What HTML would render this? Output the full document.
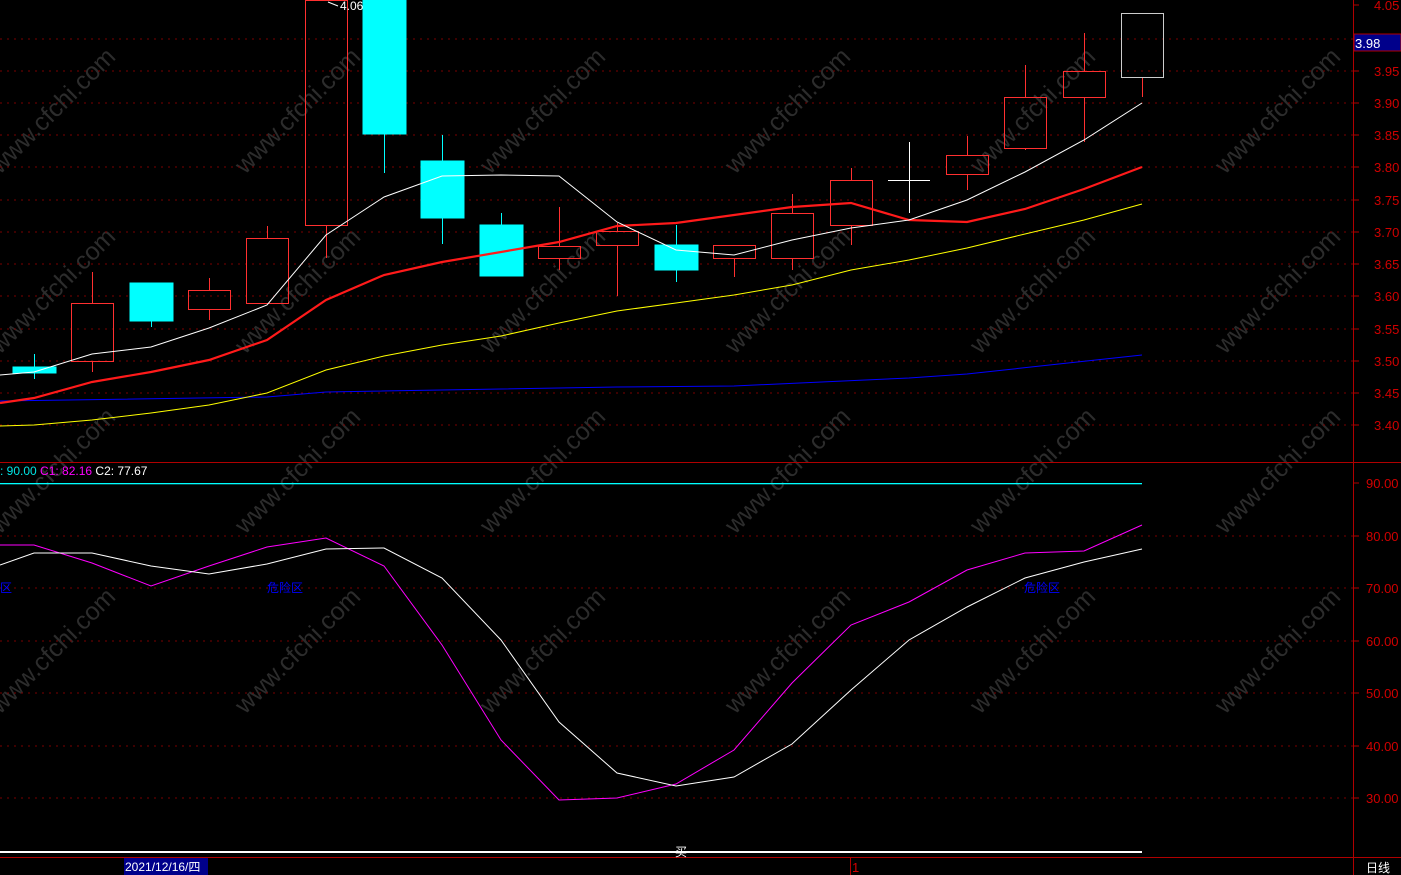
<!DOCTYPE html>
<html><head><meta charset="utf-8"><style>
body{margin:0;background:#000;width:1401px;height:875px;overflow:hidden;font-family:"Liberation Sans","Noto Sans CJK SC",sans-serif}
svg{position:absolute;left:0;top:0}
</style></head><body>
<svg width="1401" height="875" xmlns="http://www.w3.org/2000/svg" font-family="Liberation Sans, Noto Sans CJK SC, sans-serif">
<g fill="#2c2c2c" font-size="25">
<g id="wm">
<text transform="translate(0,175) rotate(-45)">www.cfchi.com</text>
<text transform="translate(245,175) rotate(-45)">www.cfchi.com</text>
<text transform="translate(490,175) rotate(-45)">www.cfchi.com</text>
<text transform="translate(735,175) rotate(-45)">www.cfchi.com</text>
<text transform="translate(980,175) rotate(-45)">www.cfchi.com</text>
<text transform="translate(1225,175) rotate(-45)">www.cfchi.com</text>
</g>
<use href="#wm" y="180"/><use href="#wm" y="360"/><use href="#wm" y="540"/>
</g>
<g stroke="#7a0000" stroke-dasharray="2,5">
<path d="M0 39H1353M0 71H1353M0 103H1353M0 135H1353M0 167H1353M0 200H1353M0 232H1353M0 264H1353M0 296H1353M0 329H1353M0 361H1353M0 393H1353M0 425H1353"/>
<path d="M0 536H1353M0 588H1353M0 641H1353M0 693H1353M0 746H1353M0 798H1353"/>
</g>
<path d="M0 462.5H1401M0 857.5H1401M1353.5 0V875M850.5 857V875" stroke="#b00000"/>
<g fill="#d00000" font-size="13">
<text x="1374" y="10">4.05</text><text x="1374" y="76">3.95</text><text x="1374" y="108">3.90</text><text x="1374" y="140">3.85</text><text x="1374" y="172">3.80</text><text x="1374" y="205">3.75</text><text x="1374" y="237">3.70</text><text x="1374" y="269">3.65</text><text x="1374" y="301">3.60</text><text x="1374" y="334">3.55</text><text x="1374" y="366">3.50</text><text x="1374" y="398">3.45</text><text x="1374" y="430">3.40</text>
<text x="1366" y="488">90.00</text><text x="1366" y="541">80.00</text><text x="1366" y="593">70.00</text><text x="1366" y="646">60.00</text><text x="1366" y="698">50.00</text><text x="1366" y="751">40.00</text><text x="1366" y="803">30.00</text>
<text x="852" y="872">1</text>
</g>
<g stroke="#b00000"><path d="M1353 5h6M1353 71h6M1353 103h6M1353 135h6M1353 167h6M1353 200h6M1353 232h6M1353 264h6M1353 296h6M1353 329h6M1353 361h6M1353 393h6M1353 425h6M1353 483h6M1353 536h6M1353 588h6M1353 641h6M1353 693h6M1353 746h6M1353 798h6"/></g>
<rect x="1354" y="34" width="47" height="17" fill="#00008b" stroke="#b00000"/>
<text x="1355" y="48" fill="#fff" font-size="13">3.98</text>
<g stroke="#ff3030" fill="none">
<path d="M92.5 272V303M92.5 361V372M209.5 278V290M209.5 309V320M267.5 226V238M326.5 225V258M559.5 207V246M559.5 258V270M617.5 223V231M617.5 245V296M734.5 258V277M792.5 194V213M792.5 258V270M851.5 168V180M851.5 225V245M967.5 136V155M967.5 174V190M1025.5 65V97M1025.5 148V150M1084.5 33V71M1084.5 97V142"/>
<rect x="71.5" y="303.5" width="42" height="58"/><rect x="188.5" y="290.5" width="42" height="19"/><rect x="246.5" y="238.5" width="42" height="65"/><rect x="305.5" y="0.5" width="42" height="225"/><rect x="538.5" y="246.5" width="42" height="12"/><rect x="596.5" y="231.5" width="42" height="14"/><rect x="713.5" y="245.5" width="42" height="13"/><rect x="771.5" y="213.5" width="42" height="45"/><rect x="830.5" y="180.5" width="42" height="45"/><rect x="946.5" y="155.5" width="42" height="19"/><rect x="1004.5" y="97.5" width="42" height="51"/><rect x="1063.5" y="71.5" width="42" height="26"/>
</g>
<path d="M1142.5 77V97" stroke="#ff3030"/>
<rect x="1121.5" y="13.5" width="42" height="64" fill="none" stroke="#ccc"/>
<g stroke="#00ffff" fill="#00ffff">
<path d="M34.5 354V379M151.5 283V327M384.5 134V173M442.5 135V244M501.5 213V276M676.5 225V282"/>
<rect x="13" y="367" width="43" height="6"/><rect x="130" y="283" width="43" height="38"/><rect x="363" y="0" width="43" height="134"/><rect x="421" y="161" width="43" height="57"/><rect x="480" y="225" width="43" height="51"/><rect x="655" y="245" width="43" height="25"/>
</g>
<path d="M909.5 142V213M888 180.5H930" stroke="#fff"/>
<text x="340" y="10" fill="#fff" font-size="12">4.06</text>
<path d="M328 2l10 4" stroke="#fff"/>
<g fill="none">
<polyline stroke="#0000ff" points="0,401 267,397 326,392 617,387 734,386 909,378 967,374 1142,355"/>
<polyline stroke="#ffff00" points="0,426 34,425 92,420 151,413 209,405 267,393 326,370 384,356 442,345 501,336 559,323 617,311 676,303 734,295 792,285 851,270 909,260 967,248 1025,234 1084,220 1142,204"/>
<polyline stroke="#ff1a1a" stroke-width="2.2" points="0,403 34,398 92,382 151,372 209,360 267,340 326,300 384,275 442,262 501,252 559,242 617,226 676,223 734,215 792,207 851,203 909,220 967,222 1025,209 1084,189 1142,167"/>
<polyline stroke="#fff" points="0,375 34,372 92,354 151,347 209,328 267,305 326,235 384,197 442,176 501,175 559,176 617,222 676,250 734,255 792,240 851,228 909,220 967,200 1025,172 1084,140 1142,103"/>
<rect x="0" y="483" width="1142" height="1.3" fill="#00ffff" stroke="none"/>
<polyline stroke="#ff00ff" points="0,545 34,545 92,563 151,586 209,566 267,547 326,538 384,566 442,645 501,740 559,800 617,798 676,784 734,750 792,683 851,625 909,602 967,570 1025,553 1084,551 1142,525"/>
<polyline stroke="#fff" points="0,565 34,553 92,553 151,566 209,574 267,564 326,549 384,548 442,578 501,640 559,722 617,773 676,786 734,777 792,744 851,690 909,640 967,607 1025,578 1084,562 1142,549"/>
<path d="M0 852H1142" stroke="#fff" stroke-width="2"/>
</g>
<text x="0" y="475" font-size="12"><tspan fill="#00e5e5">: 90.00 </tspan><tspan fill="#ff00ff">C1: 82.16 </tspan><tspan fill="#fff">C2: 77.67</tspan></text>
<g fill="#0000ff" font-size="12"><text x="0" y="592">区</text><text x="267" y="592">危险区</text><text x="1024" y="592">危险区</text></g>
<text x="675" y="856" fill="#fff" font-size="12">买</text>
<rect x="124" y="858" width="84" height="17" fill="#00008b"/>
<text x="125" y="871" fill="#fff" font-size="12">2021/12/16/四</text>
<text x="1366" y="872" fill="#fff" font-size="12">日线</text>
</svg>
</body></html>
